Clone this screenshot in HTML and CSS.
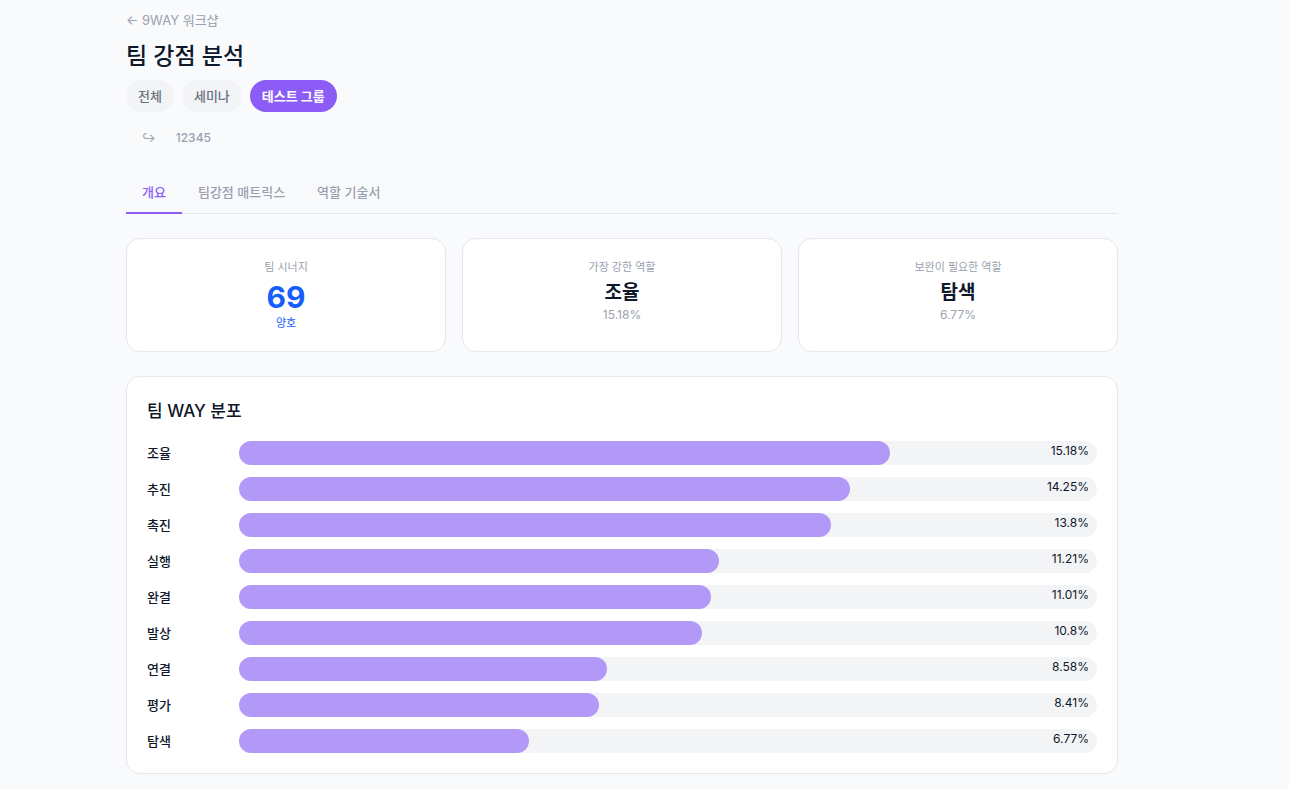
FILE: index.html
```html
<!DOCTYPE html>
<html lang="ko">
<head>
	<meta charset="utf-8">
	<title>팀 강점 분석</title>
	<link rel="stylesheet" href="styles.css">
</head>
<body>
	<main class="container">
		<a class="back" href="#">← 9WAY 워크샵</a>
		<h1>팀 강점 분석</h1>

		<div class="groups">
			<button type="button" class="chip">전체</button>
			<button type="button" class="chip">세미나</button>
			<button type="button" class="chip active">테스트 그룹</button>
		</div>
		<div class="subgroups">
			<span>↪</span>
			<button type="button" class="subgroup">12345</button>
		</div>

		<nav class="tabs">
			<button type="button" class="tab active">개요</button>
			<button type="button" class="tab">팀강점 매트릭스</button>
			<button type="button" class="tab">역할 기술서</button>
		</nav>

		<section class="cards">
			<div class="card">
				<p class="label">팀 시너지</p>
				<p class="score">69</p>
				<p class="label grade">양호</p>
			</div>
			<div class="card">
				<p class="label">가장 강한 역할</p>
				<p class="role">조율</p>
				<p class="percent">15.18%</p>
			</div>
			<div class="card">
				<p class="label">보완이 필요한 역할</p>
				<p class="role">탐색</p>
				<p class="percent">6.77%</p>
			</div>
		</section>

		<section class="panel">
			<h2>팀 WAY 분포</h2>
			<ul class="bars">
				<li><span class="name">조율</span><div class="track"><div class="fill" style="width: 75.9%"></div><span class="value">15.18%</span></div></li>
				<li><span class="name">추진</span><div class="track"><div class="fill" style="width: 71.25%"></div><span class="value">14.25%</span></div></li>
				<li><span class="name">촉진</span><div class="track"><div class="fill" style="width: 69%"></div><span class="value">13.8%</span></div></li>
				<li><span class="name">실행</span><div class="track"><div class="fill" style="width: 56%"></div><span class="value">11.21%</span></div></li>
				<li><span class="name">완결</span><div class="track"><div class="fill" style="width: 55%"></div><span class="value">11.01%</span></div></li>
				<li><span class="name">발상</span><div class="track"><div class="fill" style="width: 54%"></div><span class="value">10.8%</span></div></li>
				<li><span class="name">연결</span><div class="track"><div class="fill" style="width: 42.9%"></div><span class="value">8.58%</span></div></li>
				<li><span class="name">평가</span><div class="track"><div class="fill" style="width: 42%"></div><span class="value">8.41%</span></div></li>
				<li><span class="name">탐색</span><div class="track"><div class="fill" style="width: 33.85%"></div><span class="value">6.77%</span></div></li>
			</ul>
		</section>
	</main>
</body>
</html>
```
FILE: styles.css
```css
* {
	box-sizing: border-box;
	margin: 0;
	padding: 0;
}

body {
	padding: 10px 45px 15px 0;
	background-color: #f9fafc;
	color: #0f172b;
	font-family: Inter, "Noto Sans CJK KR", sans-serif;
	font-size: 13px;
	line-height: 20px;
}

button {
	border: none;
	background: none;
	font: inherit;
	cursor: pointer;
}

.container {
	max-width: 1024px;
	margin: 0 auto;
	padding: 0 16px;
}

.back {
	display: block;
	margin-bottom: 10px;
	color: #99a1af;
	text-decoration: none;
}

h1 {
	margin-bottom: 8px;
	font-size: 23px;
	font-weight: 500;
	line-height: 32px;
}

.groups {
	display: flex;
	gap: 8px;
	margin-bottom: 12px;
}

.chip {
	padding: 6px 12px;
	border-radius: 16px;
	background-color: #f3f4f6;
	color: #6a7282;
	font-weight: 500;
}

.chip.active {
	background-color: #8b5cf6;
	color: #fff;
	font-weight: 700;
}

.subgroups {
	display: flex;
	align-items: center;
	gap: 8px;
	padding-left: 16px;
	color: #99a1af;
	font-size: 12px;
}

.subgroup {
	padding: 4px 12px;
	color: #99a1af;
	font-weight: 500;
}

.tabs {
	display: flex;
	margin: 20px 0 24px;
	box-shadow: inset 0 -1px #e5e7eb;
}

.tab {
	padding: 10px 16px;
	border-bottom: 2px solid transparent;
	color: #99a1af;
	font-weight: 500;
}

.tab.active {
	border-bottom-color: #8b5cf6;
	color: #8b5cf6;
}

.cards {
	display: grid;
	grid-template-columns: repeat(3, 1fr);
	gap: 16px;
	margin-bottom: 24px;
}

.card,
.panel {
	padding: 20px;
	border: 1px solid #e5e7eb;
	border-radius: 14px;
	background-color: #fff;
}

.card {
	text-align: center;
}

.label,
.percent {
	color: #99a1af;
	font-size: 11px;
	line-height: 16px;
}

.percent {
	font-size: 12px;
}

.score {
	margin-top: 4px;
	color: #155dfc;
	font-size: 30px;
	font-weight: 700;
	line-height: 36px;
}

.grade {
	color: #155dfc;
}

.role {
	margin-top: 4px;
	font-size: 19px;
	font-weight: 700;
	line-height: 28px;
}

h2 {
	margin-bottom: 16px;
	font-size: 17px;
	font-weight: 500;
	line-height: 28px;
}

.bars {
	display: grid;
	gap: 12px;
	list-style: none;
}

.bars li {
	display: flex;
	align-items: center;
	gap: 12px;
}

.name {
	width: 80px;
	font-weight: 500;
}

.track {
	position: relative;
	flex: 1;
	height: 24px;
	border-radius: 12px;
	background-color: #f3f4f6;
}

.fill {
	height: 24px;
	border-radius: 12px;
	background-color: #b399f7;
}

.value {
	position: absolute;
	top: 0;
	right: 8px;
	font-size: 12px;
}
```
